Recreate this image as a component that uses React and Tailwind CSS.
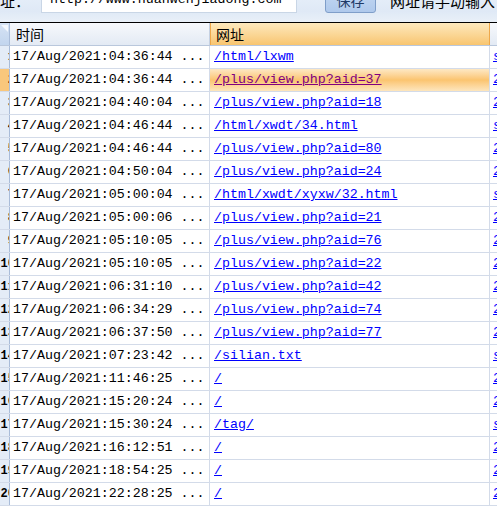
import React from 'react';

const rows = [
  ['17/Aug/2021:04:36:44 ...', '/html/lxwm', 's'],
  ['17/Aug/2021:04:36:44 ...', '/plus/view.php?aid=37', '2'],
  ['17/Aug/2021:04:40:04 ...', '/plus/view.php?aid=18', '2'],
  ['17/Aug/2021:04:46:44 ...', '/html/xwdt/34.html', 's'],
  ['17/Aug/2021:04:46:44 ...', '/plus/view.php?aid=80', '2'],
  ['17/Aug/2021:04:50:04 ...', '/plus/view.php?aid=24', '2'],
  ['17/Aug/2021:05:00:04 ...', '/html/xwdt/xyxw/32.html', 's'],
  ['17/Aug/2021:05:00:06 ...', '/plus/view.php?aid=21', '2'],
  ['17/Aug/2021:05:10:05 ...', '/plus/view.php?aid=76', '2'],
  ['17/Aug/2021:05:10:05 ...', '/plus/view.php?aid=22', '2'],
  ['17/Aug/2021:06:31:10 ...', '/plus/view.php?aid=42', '2'],
  ['17/Aug/2021:06:34:29 ...', '/plus/view.php?aid=74', '2'],
  ['17/Aug/2021:06:37:50 ...', '/plus/view.php?aid=77', '2'],
  ['17/Aug/2021:07:23:42 ...', '/silian.txt', 's'],
  ['17/Aug/2021:11:46:25 ...', '/', '2'],
  ['17/Aug/2021:15:20:24 ...', '/', '2'],
  ['17/Aug/2021:15:30:24 ...', '/tag/', 's'],
  ['17/Aug/2021:16:12:51 ...', '/', '2'],
  ['17/Aug/2021:18:54:25 ...', '/', '2'],
  ['17/Aug/2021:22:28:25 ...', '/', '2'],
];

const mono = { fontFamily: '"Liberation Mono", "DejaVu Sans Mono", monospace' };

const App = () => {
  return (
    <div
      className="w-[497px] h-[515px] overflow-hidden bg-white text-black"
      style={{ fontFamily: '"Noto Sans CJK SC", "Noto Sans", sans-serif' }}
    >
      {/* Toolbar (scrolled, top cut off) */}
      <div className="h-[22px] overflow-hidden bg-gradient-to-b from-[#e4edf8] via-[#dfe9f6] to-[#e9f0f8]">
        <div className="flex items-center h-[26px] -mt-[13px] text-[15px] whitespace-nowrap">
          <span className="w-[41px] shrink-0 leading-none">址：</span>
          <div className="w-[256px] h-[26px] shrink-0 bg-white border border-[#c9d6e6] flex items-center pl-[8px] text-[13.3px] leading-none" style={mono}>
            http://www.huanwenjiadong.com
          </div>
          <div className="ml-[28px] w-[51px] h-[26px] shrink-0 rounded-[3px] border border-[#7f9ec9] bg-gradient-to-b from-[#c6daf3] to-[#afc9ec] flex items-center justify-center text-[14px] text-[#1e3a66] leading-none">
            保存
          </div>
          <span className="ml-[14px] text-[15px] leading-none">网址请手动输入</span>
        </div>
      </div>

      {/* Grid */}
      <div className="border-t border-black">
        {/* Header */}
        <div className="flex h-[23px] border-b border-[#b9c7dc]">
          <div className="w-[10px] shrink-0 bg-gradient-to-b from-[#d6e3f4] to-[#c2d5ee] border-r border-[#a9bcd9] relative">
            <div className="absolute right-[1px] top-[2px] w-0 h-0 border-l-[7px] border-l-transparent border-t-[7px] border-t-[#f4f8fd]" />
          </div>
          <div className="w-[200px] shrink-0 bg-gradient-to-b from-[#f7f9fc] to-[#e3eaf4] border-r border-[#c5d1e3] flex items-center pl-[6px] text-[14px]">
            时间
          </div>
          <div className="w-[280px] shrink-0 bg-gradient-to-b from-[#fde9bd] to-[#f8c56f] border-x border-[#eea84a] flex items-center pl-[5px] text-[14px]">
            网址
          </div>
          <div className="flex-1 bg-gradient-to-b from-[#f7f9fc] to-[#e3eaf4]" />
        </div>

        {rows.map(([time, url, extra], i) => {
          const selected = i === 1;
          return (
            <div key={i} className="flex h-[23px] border-b border-[#d3dbe9] text-[13.3px] leading-none" style={mono}>
              <div
                className={`w-[10px] shrink-0 border-r border-[#a9bcd9] flex items-center justify-end overflow-hidden whitespace-nowrap ${
                  selected ? 'bg-[#f9c77c]' : 'bg-[#e4ecf7]'
                }`}
              >
                <span className="-mr-[6px] font-bold text-[12px]">{i + 1}</span>
              </div>
              <div className="w-[200px] shrink-0 border-r border-[#d3dbe9] flex items-center pl-[3px] whitespace-nowrap overflow-hidden">
                {time}
              </div>
              <div
                className={`w-[280px] shrink-0 border-r border-[#d3dbe9] flex items-center pl-[4px] whitespace-nowrap overflow-hidden ${
                  selected ? 'bg-gradient-to-b from-[#fde8c4] via-[#fbc46f] to-[#fde6bd]' : ''
                }`}
              >
                <span className={`underline ${selected ? 'text-[#800080]' : 'text-[#0000ff]'}`}>{url}</span>
              </div>
              <div className="flex-1 flex items-center pl-[3px] overflow-hidden whitespace-nowrap">
                <span className="underline text-[#0000ff]">{extra}</span>
              </div>
            </div>
          );
        })}
      </div>
    </div>
  );
};

export default App;
